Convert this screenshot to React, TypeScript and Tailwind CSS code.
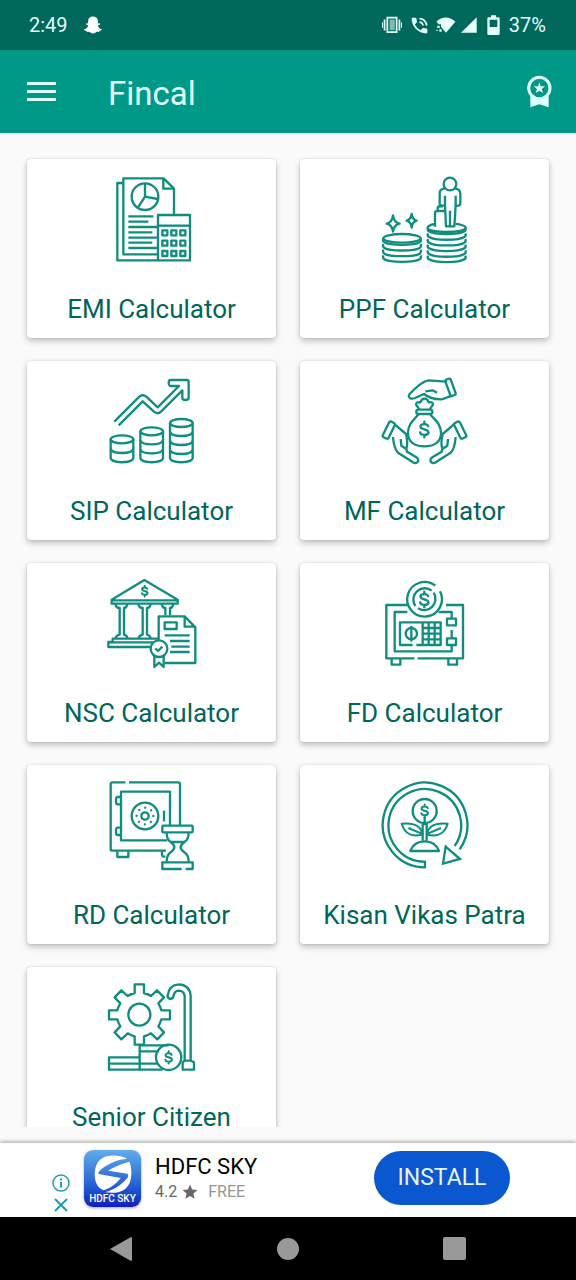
import type { ReactNode } from "react";
import { FaSnapchatGhost } from "react-icons/fa";
import { MdPhoneInTalk, MdStar } from "react-icons/md";

function CardIcon({ viewBox, children }: { viewBox: string; children: ReactNode }) {
  return (
    <svg
      viewBox={viewBox}
      className="size-[90px]"
      fill="none"
      stroke="#0f8e80"
      strokeWidth={7}
      strokeLinejoin="round"
      aria-hidden="true"
    >
      {children}
    </svg>
  );
}

const LEFT = "51 33 270 270";
const RIGHT = "45 33 270 270";

function Dollar({ x, y, s = 1, w = 6 }: { x: number; y: number; s?: number; w?: number }) {
  return (
    <path
      transform={`translate(${x} ${y}) scale(${s})`}
      strokeWidth={w / s}
      strokeLinecap="round"
      d="M11 -9Q9 -15 0 -15Q-11 -15 -11 -8Q-11 -2 0 0Q12 3 12 9Q11 16 0 16Q-10 16 -12 9M0 -22V-15M0 16V23"
    />
  );
}

function EmiIcon() {
  return (
    <CardIcon viewBox={LEFT}>
      <path d="M100 57H82V289H204" />
      <path d="M204 271H100V43H221L252 74V153M220 45V74H252" />
      <circle cx="165" cy="98" r="40" />
      <path d="M165 58V98L203 105M165 98L143 132" />
      <path d="M115 157H190M115 173H175M115 189H203M115 205H187M115 221H203M115 236H187M115 252H203" />
      <rect x="204" y="153" width="96" height="136" />
      <path d="M204 185H300" />
      {[199, 230, 261].map((y) =>
        [217, 244, 271].map((x) => <rect key={`${x}-${y}`} x={x} y={y} width="15" height="15" />),
      )}
    </CardIcon>
  );
}

function PpfIcon() {
  return (
    <CardIcon viewBox={RIGHT}>
      <ellipse cx="111" cy="223" rx="56" ry="13" />
      {[223, 240, 257, 274].map((y) => (
        <path key={y} d={`M55 ${y}q-3 8 3 12c16 10 90 10 106 0q6 -4 3 -12`} />
      ))}
      <path d="M210 180Q188 184 188 191C188 208 302 208 302 191Q302 184 271 179" />
      {[191, 208, 225, 242, 259, 275].map((y) => (
        <path key={y} d={`M189 ${y}q-3 8 3 11c16 11 90 11 106 0q6 -3 3 -11`} />
      ))}
      <circle cx="255" cy="60" r="19" />
      <path d="M241 73Q224 74 224 88V119Q224 126 238 125M269 73Q286 75 286 90V120Q286 126 272 125" />
      <path d="M240 95V125L243 187H268L272 125V95M255 140V187" />
      <path d="M240 141H216Q210 141 210 148V188M218 140V131Q218 126 234 127" />
      <path d="M84 154Q87 176 104 179Q87 182 84 203Q81 182 65 179Q81 176 84 154Z" />
      <path d="M140 150Q142 167 155 170Q142 173 140 191Q138 173 125 170Q138 167 140 150Z" />
    </CardIcon>
  );
}

function SipIcon() {
  const stacks = [
    { x: 96, top: 220, levels: [249] },
    { x: 185, top: 196, levels: [223, 250] },
    { x: 274, top: 171, levels: [198, 225, 252] },
  ];
  return (
    <CardIcon viewBox={LEFT}>
      <path d="M73 167L148 92Q158 83 169 92L203 124L267 60H240Q236 56 236 51Q236 42 243 42H290Q296 42 296 48V96Q295 102 286 102Q277 102 277 96V73L213 137Q203 146 192 137L158 106L86 178" />
      {stacks.map(({ x, top, levels }) => (
        <g key={x}>
          <ellipse cx={x} cy={top} rx="34" ry="12" />
          <path d={`M${x - 34} ${top}V276C${x - 34} 293 ${x + 34} 293 ${x + 34} 276V${top}`} />
          {levels.map((y) => (
            <path key={y} d={`M${x - 34} ${y}C${x - 28} ${y + 16} ${x + 28} ${y + 16} ${x + 34} ${y}`} />
          ))}
        </g>
      ))}
    </CardIcon>
  );
}

function MfIcon() {
  return (
    <CardIcon viewBox={RIGHT}>
      <path d="M160 145C150 160 129 171 129 201C129 229 150 241 178 241C207 241 228 229 228 201C228 171 206 160 196 145" />
      <rect x="154" y="131" width="48" height="13" rx="6" />
      <path d="M163 130L153 116Q154 107 166 109Q170 98 179 98Q188 98 191 109Q204 107 204 116L194 130" />
      <Dollar x={178} y={190} s={1.05} w={7} />
      <path d="M246 47C220 46 205 43 191 43C177 44 151 65 134 84Q128 92 136 97Q142 99 150 96L177 84C187 92 201 100 228 100C242 98 249 92 258 90M181 76L203 73L216 80" />
      <rect x="248" y="38" width="17" height="52" rx="5" transform="rotate(-20 256 64)" />
      <path d="M84 213C86 238 91 252 99 260L144 289Q156 295 160 284Q160 278 154 274L126 257L124 248Q130 232 123 204L90 176M107 219L109 239L124 249" />
      <rect x="62" y="166" width="19" height="52" rx="5" transform="rotate(26 71 192)" />
      <path d="M272 213C270 238 266 252 257 260L212 289Q200 295 196 284Q196 278 202 274L230 257L232 248Q226 232 233 204L266 176M249 219L247 239L232 249" />
      <rect x="276" y="166" width="19" height="52" rx="5" transform="rotate(-26 286 192)" />
    </CardIcon>
  );
}

function NscIcon() {
  return (
    <CardIcon viewBox={LEFT}>
      <path d="M65 95L163 36L263 95V107H65ZM65 97H263" />
      <Dollar x={164} y={69} s={0.72} w={6} />
      <path d="M76 108Q78 120 89 120V200Q77 202 77 212M112 108Q110 120 102 120V200Q112 202 112 212" />
      <path d="M145 108Q147 120 158 120V200Q147 202 146 212M182 108Q180 120 171 120V200Q181 202 182 212" />
      <path d="M215 108Q217 120 226 120V142M250 108Q248 120 240 120V142" />
      <path d="M204 212H68V222H55V237H182M55 223H190" />
      <path d="M206 217V145H284L316 178V285H224M284 147V176H316" />
      <rect x="224" y="163" width="36" height="20" />
      <path d="M224 202H299M240 219H299M244 236H299M240 252H299" />
      <circle cx="207" cy="242" r="25" />
      <path d="M196 241L204 249L217 236M193 263V297L207 284L221 297V263" />
    </CardIcon>
  );
}

function FdIcon() {
  return (
    <CardIcon viewBox={RIGHT}>
      <path d="M126 111H64V271H148M158 271H294V111H243" />
      <path d="M80 273V290H106V273M250 273V290H276V273" />
      <path d="M211 53A52 52 0 1 0 225 70" />
      <path d="M200 68A34 34 0 0 0 151 114M159 121A34 34 0 0 0 206 74" />
      <Dollar x={178} y={94} s={1.05} w={7} />
      <path d="M127 132H89V250H260V232M221 132H260V151" />
      <rect x="246" y="152" width="27" height="20" />
      <path d="M260 186V211" />
      <rect x="246" y="211" width="27" height="20" />
      <path d="M143 231H105V163H227V231H154M173 163V231M191 163V231M209 163V231M173 180H227M173 197H227M173 214H227" />
      <circle cx="139" cy="197" r="17" />
      <path d="M139 174V221" />
    </CardIcon>
  );
}

function RdIcon() {
  return (
    <CardIcon viewBox={LEFT}>
      <path d="M106 37H68Q62 37 62 43V236Q62 242 68 242H228M117 37H264Q270 37 270 43V166" />
      <path d="M240 166V65H93V211H232" />
      <path d="M92 81H84Q78 81 78 88V96Q78 103 84 103H92M92 173H84Q78 173 78 180V188Q78 195 84 195H92" />
      <path d="M82 244V261H115V244M216 244V254Q216 260 226 260" />
      <circle cx="165" cy="138" r="40" />
      <circle cx="165" cy="138" r="11" />
      <circle
        cx="165"
        cy="138"
        r="25"
        strokeDasharray="0.1 19.53"
        strokeLinecap="round"
        strokeWidth="7"
      />
      <path d="M222 122V154" />
      <rect x="217" y="167" width="91" height="20" rx="3" />
      <path d="M230 188Q230 208 242 216Q264 232 242 247Q230 255 230 275M296 188Q296 208 283 216Q261 232 283 247Q296 255 296 275" />
      <path d="M275 297H217V277H308V297H287M242 216H283" />
    </CardIcon>
  );
}

function KisanIcon() {
  return (
    <CardIcon viewBox={RIGHT}>
      <path d="M269 228A109 109 0 1 0 180 275V292A127 127 0 1 1 284 238" />
      <path d="M242 230L285 267L234 281Z" fill="#fff" strokeLinejoin="miter" />
      <circle cx="179" cy="123" r="36" />
      <Dollar x={179} y={122} s={0.85} w={6} />
      <path d="M179 140V160M173 212V162H185V212" />
      <path
        strokeWidth="6"
        d="M171 190C167 166 144 158 110 161C118 189 139 202 171 194ZM130 174L170 191M187 190C191 166 214 158 248 161C240 189 219 202 187 194ZM228 174L188 191"
      />
      <path d="M136 243Q147 214 179 214Q211 214 222 243Z" />
    </CardIcon>
  );
}

function SeniorIcon() {
  return (
    <CardIcon viewBox="51 38 270 270">
      <path d="M134 42H162V68Q174 71 183 77L201 60L222 81L205 99Q211 108 214 120H240V147H214Q211 159 205 168L222 186L202 207L183 189Q174 195 162 198V223H134V198Q122 195 113 189L94 207L74 186L91 168Q85 159 82 147H57V120H82Q85 108 91 99L74 81L94 60L113 77Q122 71 134 68Z" />
      <circle cx="148" cy="133" r="33" />
      <path d="M149 223V298M149 225H236M149 243H206M149 261H57V298H218M57 280H204" />
      <circle cx="236" cy="261" r="38" />
      <Dollar x={236} y={261} s={0.82} />
      <path d="M284 271V77Q281 61 266 61Q254 62 251 75Q249 86 241 86Q232 84 233 75Q237 44 267 42Q300 44 302 77V271" />
      <path d="M284 271H303L312 276V298H278V276Z" />
    </CardIcon>
  );
}

const calculators = [
  { label: "EMI Calculator", Icon: EmiIcon },
  { label: "PPF Calculator", Icon: PpfIcon },
  { label: "SIP Calculator", Icon: SipIcon },
  { label: "MF Calculator", Icon: MfIcon },
  { label: "NSC Calculator", Icon: NscIcon },
  { label: "FD Calculator", Icon: FdIcon },
  { label: "RD Calculator", Icon: RdIcon },
  { label: "Kisan Vikas Patra", Icon: KisanIcon },
  { label: "Senior Citizen", Icon: SeniorIcon },
];

function StatusBar() {
  return (
    <div className="flex h-[50px] shrink-0 items-center bg-[#00675b] pr-[30px] pl-[29px] text-[20px] text-[#e0fffa]">
      <span>2:49</span>
      <FaSnapchatGhost className="ml-[16px] size-[18px] text-white" aria-hidden="true" />
      <div className="ml-auto flex items-center text-[#e6fffb]">
        <svg viewBox="281 45 58 58" className="size-5" fill="currentColor" aria-hidden="true">
          <path d="M294 50H326V97H294ZM299 55V92H321V55Z" fillRule="evenodd" />
          <path d="M303 58H318V89H303Z" opacity=".55" />
          <path d="M286 58H291V90H286ZM281 66H284V82H281ZM329 58H334V90H329ZM336 66H339V82H336Z" />
        </svg>
        <MdPhoneInTalk className="ml-[7px] size-[21px]" aria-hidden="true" />
        <svg viewBox="442 47 60 54" className="ml-[6px] h-[18px] w-5" fill="currentColor" aria-hidden="true">
          <path d="M443 64Q471 39 500 64L472 97L457 79V72H450Z" />
          <path d="M446 76H453V83H446ZM452 87H459V94H452ZM443 88H447V92H443Z" />
        </svg>
        <svg viewBox="518 49 48 48" className="ml-[5px] size-4" fill="currentColor" aria-hidden="true">
          <path d="M565 50V96H518Z" />
        </svg>
        <svg viewBox="594 44 39 60" className="ml-[10px] h-5 w-[13px]" fill="currentColor" aria-hidden="true">
          <path
            d="M606 45H621V51H628Q632 51 632 55V100Q632 104 628 104H599Q595 104 595 100V55Q595 51 599 51H606ZM602 58V80H625V58Z"
            fillRule="evenodd"
          />
        </svg>
        <span className="ml-[9px]">37%</span>
      </div>
    </div>
  );
}

function AppBar() {
  return (
    <header className="flex h-[83px] shrink-0 items-center bg-[#009886] pr-[23px] pl-[27px] text-[#e0fffa]">
      <button type="button" aria-label="Open menu" className="flex flex-col gap-[5px]">
        <span className="h-[3px] w-[29px] bg-current" />
        <span className="h-[3px] w-[29px] bg-current" />
        <span className="h-[3px] w-[29px] bg-current" />
      </button>
      <h1 className="ml-[52px] pt-1 text-[33px] leading-10">Fincal</h1>
      <button type="button" aria-label="Go premium" className="ml-auto">
        <svg viewBox="715 225 81 99" className="h-[33px] w-[27px]" aria-hidden="true">
          <circle cx="755" cy="264" r="32" fill="none" stroke="currentColor" strokeWidth="9" />
          <path d="M728 286Q755 306 783 286V322L755 313L728 322Z" fill="currentColor" />
          <path
            d="M755 247L759 259H772L762 267L766 279L755 272L744 279L748 267L738 259H751Z"
            fill="currentColor"
          />
        </svg>
      </button>
    </header>
  );
}

function AdBanner() {
  return (
    <aside className="flex h-[74px] shrink-0 items-center bg-white pr-[66px] pb-[4px] pl-[52px] shadow-[0_-2px_3px_rgba(0,0,0,0.25)]">
      <div className="flex flex-col items-center gap-[5px] self-end text-[#1d9fb0]">
        <button type="button" aria-label="Ad information">
          <svg viewBox="0 0 18 18" className="size-[18px]" fill="none" stroke="currentColor" aria-hidden="true">
            <circle cx="9" cy="9" r="8" strokeWidth="1.5" />
            <path d="M9 8V13.5M9 4.5V6.5" strokeWidth="2" />
          </svg>
        </button>
        <button type="button" aria-label="Close ad">
          <svg viewBox="0 0 16 16" className="size-4" stroke="currentColor" strokeWidth="2" aria-hidden="true">
            <path d="M2 2L14 14M14 2L2 14" />
          </svg>
        </button>
      </div>
      <div className="ml-[14px] flex h-[57px] w-[57px] flex-col items-center rounded-[9px] bg-linear-to-b from-[#63aceb] via-[#326fd8] to-[#1418c4] pt-[5px] shadow-[0_1px_3px_rgba(0,0,80,0.35)]">
        <svg viewBox="255 194 102 114" className="h-[38px] w-[38px]" preserveAspectRatio="none" aria-hidden="true">
          <path
            fill="#fff"
            d="M318 196C280 192 259 209 257 248C256 278 266 294 281 300C302 293 319 275 327 263L267 251Q266 243 273 238C293 219 319 207 344 205Q333 198 318 196ZM350 214C331 219 305 231 293 241L345 250Q350 258 342 266C326 286 307 298 285 306C323 312 352 300 355 256Q357 230 350 214Z"
          />
        </svg>
        <span className="text-[10px] leading-[12px] font-medium whitespace-nowrap text-white">HDFC SKY</span>
      </div>
      <div className="ml-[14px]">
        <p className="text-[22px] leading-[28px] text-black">HDFC SKY</p>
        <p className="flex items-center text-[16px] leading-[22px] text-[#666]">
          4.2
          <MdStar className="ml-[4px] size-[18px]" aria-hidden="true" />
          <span className="ml-[9px] text-[#949494]">FREE</span>
        </p>
      </div>
      <button
        type="button"
        className="ml-auto h-[54px] w-[136px] rounded-full bg-[#0b57d0] text-[23px] text-[#e8f4ff]"
      >
        INSTALL
      </button>
    </aside>
  );
}

function NavigationBar() {
  return (
    <nav className="flex h-[63px] shrink-0 items-center justify-between bg-black px-[110px] text-[#999]">
      <button type="button" aria-label="Back">
        <svg viewBox="0 0 22 24" className="h-6 w-[22px]" fill="currentColor" aria-hidden="true">
          <path d="M0 12L21 0Q22 0 22 1V23Q22 24 21 24Z" />
        </svg>
      </button>
      <button type="button" aria-label="Home" className="size-[22px] rounded-full bg-current" />
      <button type="button" aria-label="Recent apps" className="size-[23px] rounded-[2px] bg-current" />
    </nav>
  );
}

export default function App() {
  return (
    <div className="flex h-screen flex-col bg-[#fafafa] font-['Roboto',sans-serif]">
      <StatusBar />
      <AppBar />
      <main className="mb-4 min-h-0 flex-1 overflow-y-auto px-[27px] pt-[26px] [scrollbar-width:none]">
        <div className="grid grid-cols-2 gap-x-6 gap-y-[23px]">
          {calculators.map(({ label, Icon }) => (
            <button
              key={label}
              type="button"
              className="flex h-[179px] flex-col items-center gap-[34px] rounded-[4px] bg-white pt-[16px] shadow-[0_3px_6px_rgba(0,0,0,0.24),0_0_2px_rgba(0,0,0,0.15)]"
            >
              <Icon />
              <span className="text-[26px] leading-5 text-[#00665a]">{label}</span>
            </button>
          ))}
        </div>
      </main>
      <AdBanner />
      <NavigationBar />
    </div>
  );
}
